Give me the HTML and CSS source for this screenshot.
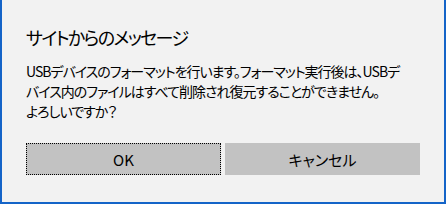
FILE: index.html
```html
<!DOCTYPE html>
<html lang="ja">
<head>
  <meta charset="UTF-8">
  <title>サイトからのメッセージ</title>
  <link rel="stylesheet" href="styles.css">
</head>
<body>
  <div class="dialog">
    <h1 class="titulo">サイトからのメッセージ</h1>
    <p class="mensagem">USBデバイスのフォーマットを行います。フォーマット実行後は、USBデ<br>バイス内のファイルはすべて削除され復元することができません。<br>よろしいですか？</p>
    <div class="botoes">
      <button class="ok">OK</button>
      <button>キャンセル</button>
    </div>
  </div>
</body>
</html>
```

FILE: styles.css
```css
* { box-sizing: border-box; margin: 0; padding: 0; }
html, body {
  width: 100%; height: 100%;
  background-color: #f2f2f2;
  font-family: "Noto Sans CJK JP", "Noto Sans", sans-serif;
  font-feature-settings: "palt";
  color: #000;
}
.dialog {
  height: 204px;
  padding: 24px 24px 0;
  border: 2px solid #1464c8;
  border-top: none;
  overflow: hidden;
}
.titulo {
  font-size: 18px;
  font-weight: normal;
  line-height: 26px;
  letter-spacing: -1.6px;
}
.mensagem {
  margin-top: 11px;
  font-size: 14px;
  line-height: 20px;
  letter-spacing: -1px;
  white-space: nowrap;
}
.botoes {
  display: flex;
  gap: 4px;
  margin-top: 22px;
}
button {
  width: 195px;
  height: 32px;
  font-family: inherit;
  font-feature-settings: "palt";
  font-size: 15px;
  color: #000;
  background-color: #c2c2c2;
  border: none;
}
.ok {
  border: 1px dotted #000;
}
```
